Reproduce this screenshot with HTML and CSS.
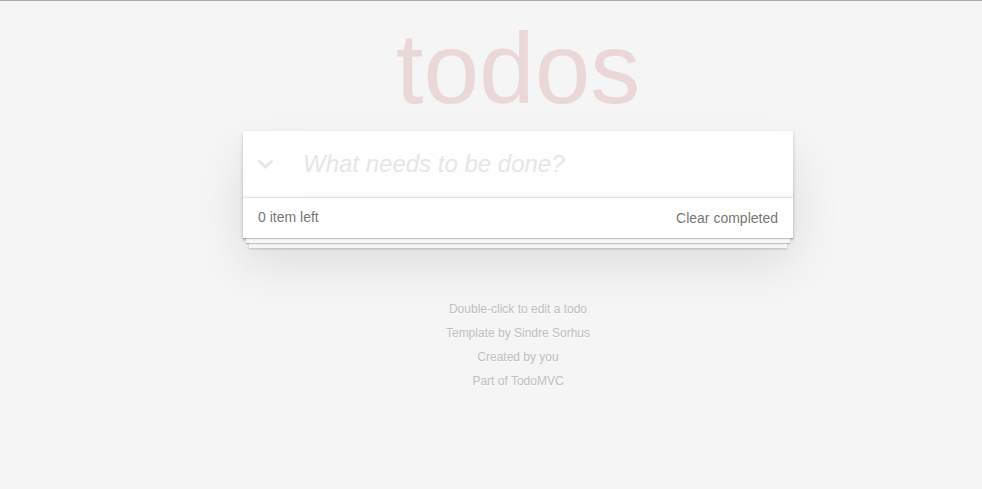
FILE: index.html
```html
<!DOCTYPE html>
<html lang="en">
<head>
<meta charset="utf-8">
<title>Template • TodoMVC</title>
<link rel="stylesheet" href="styles.css">
</head>
<body>
<div class="page">
  <h1 class="title">todos</h1>
  <section class="todoapp">
    <header class="header">
      <label class="toggle-all" for="toggle-all">
        <svg width="17" height="10" viewBox="0 0 17 10" aria-hidden="true"><polyline points="1.5,1.5 8.5,8 15.5,1.5" fill="none" stroke="#e6e6e6" stroke-width="3"/></svg>
      </label>
      <input id="new-todo" class="new-todo" placeholder="What needs to be done?">
    </header>
    <footer class="footer">
      <span class="todo-count"><strong>0</strong> item left</span>
      <button class="clear-completed">Clear completed</button>
    </footer>
  </section>
  <footer class="info">
    <p>Double-click to edit a todo</p>
    <p>Template by <a href="#">Sindre Sorhus</a></p>
    <p>Created by <a href="#">you</a></p>
    <p>Part of <a href="#">TodoMVC</a></p>
  </footer>
</div>
</body>
</html>
```
FILE: styles.css
```css
html, body {
  margin: 0;
  padding: 0;
}
html {
  background: #f5f5f5;
}
body {
  border-top: 1px solid #a9a9a9;
  padding-left: 54px;
  font: 14px "Liberation Sans", Arial, Helvetica, sans-serif;
  line-height: 1.4em;
  color: #4d4d4d;
  background: #f5f5f5;
  -webkit-font-smoothing: antialiased;
}
.page {
  max-width: 550px;
  min-width: 230px;
  margin: 0 auto;
}
.title {
  margin: 17px 0 13px;
  font-size: 100px;
  line-height: 100px;
  font-weight: 400;
  text-align: center;
  color: rgba(175, 47, 47, 0.15);
}
.todoapp {
  position: relative;
  background: #fff;
  box-shadow: 0 2px 4px 0 rgba(0, 0, 0, 0.2), 0 25px 50px 0 rgba(0, 0, 0, 0.1);
}
.header {
  display: flex;
  align-items: center;
  box-shadow: inset 0 -2px 1px rgba(0, 0, 0, 0.03);
}
.toggle-all {
  display: flex;
  align-items: center;
  width: 60px;
  padding-left: 14px;
  box-sizing: border-box;
  flex: none;
}
.toggle-all svg {
  display: block;
}
.new-todo {
  flex: 1;
  min-width: 0;
  margin: 0;
  padding: 16px 16px 16px 0;
  border: none;
  outline: none;
  background: rgba(0, 0, 0, 0.003);
  font: inherit;
  font-size: 24px;
  line-height: 1.4em;
  color: inherit;
}
.new-todo::placeholder {
  font-style: italic;
  color: #e6e6e6;
}
.footer {
  position: relative;
  display: flex;
  justify-content: space-between;
  align-items: flex-start;
  height: 20px;
  padding: 10px 15px;
  color: #777;
  border-top: 1px solid #e6e6e6;
}
.footer::before {
  content: "";
  position: absolute;
  right: 0;
  bottom: 0;
  left: 0;
  height: 50px;
  overflow: hidden;
  box-shadow: 0 1px 1px rgba(0, 0, 0, 0.2),
              0 8px 0 -3px #f6f6f6,
              0 9px 1px -3px rgba(0, 0, 0, 0.2),
              0 16px 0 -6px #f6f6f6,
              0 17px 2px -6px rgba(0, 0, 0, 0.2);
  pointer-events: none;
}
.todo-count strong {
  font-weight: 400;
}
.clear-completed {
  margin: 0;
  padding: 0;
  border: 0;
  background: none;
  font: inherit;
  line-height: 20px;
  color: inherit;
  cursor: pointer;
}
.info {
  margin: 65px auto 0;
  color: #bfbfbf;
  font-size: 12px;
  text-shadow: 0 1px 0 rgba(255, 255, 255, 0.5);
  text-align: center;
}
.info p {
  line-height: 1;
  margin: 12px 0;
}
.info a {
  color: inherit;
  text-decoration: none;
}
```
